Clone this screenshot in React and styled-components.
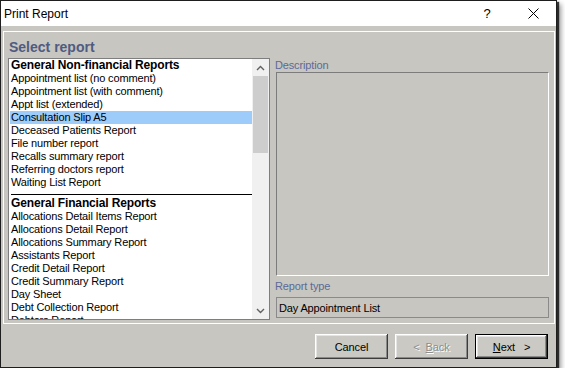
import React from "react";
import styled, { createGlobalStyle } from "styled-components";

const GlobalStyle = createGlobalStyle`
  html, body { margin: 0; padding: 0; background: #ffffff; }
  body { font-family: "Liberation Sans", Arial, sans-serif; }
  * { box-sizing: border-box; }
`;

const GRAY = "#c8c6c0";

const Window = styled.div`
  width: 557px;
  height: 368px;
  border: 1px solid #1e1e1e;
  display: flex;
  flex-direction: column;
  background: ${GRAY};
  box-shadow: 2px 2px 1px rgba(0, 0, 0, 0.75), 4px 4px 5px rgba(0, 0, 0, 0.4);
`;

const TitleBar = styled.div`
  height: 25px;
  flex: none;
  background: #ffffff;
  display: flex;
  align-items: center;
`;

const Title = styled.div`
  flex: 1;
  padding-left: 3px;
  font-size: 12px;
  color: #000;
`;

const TitleButton = styled.div`
  width: 46px;
  height: 25px;
  display: flex;
  align-items: center;
  justify-content: center;
  font-size: 13px;
  color: #000;
`;

const Body = styled.div`
  flex: 1;
  display: flex;
  flex-direction: column;
  padding: 5px 1px 0 2px;
`;

const Panel = styled.div`
  height: 293px;
  border: 1px solid #ffffff;
  display: flex;
  gap: 6px;
  padding: 7px 5px 0 4px;
`;

const LeftCol = styled.div`
  width: 262px;
  display: flex;
  flex-direction: column;
`;

const Heading = styled.div`
  font-size: 14px;
  line-height: 16px;
  font-weight: bold;
  color: #4f5b82;
  margin: 0 0 3px 1px;
`;

const ListBox = styled.div`
  height: 262px;
  border: 1px solid #7e7e7e;
  background: #ffffff;
  display: flex;
  overflow: hidden;
`;

const Items = styled.div`
  flex: 1;
  padding-left: 1px;
  overflow: hidden;
`;

const Row = styled.div`
  height: 13px;
  line-height: 13px;
  padding-left: 1px;
  font-size: ${(p) => (p.$group ? "12px" : "11px")};
  font-weight: ${(p) => (p.$group ? "bold" : "normal")};
  letter-spacing: -0.15px;
  white-space: nowrap;
  color: #000;
  background: ${(p) => (p.$selected ? "#9dcbfa" : "transparent")};
`;

const Separator = styled.div`
  height: 8px;
  padding-top: 5px;
  &::after {
    content: "";
    display: block;
    height: 1px;
    margin-left: 1px;
    background: #000;
  }
`;

const ScrollBar = styled.div`
  width: 17px;
  flex: none;
  background: #f0f0f0;
  display: flex;
  flex-direction: column;
`;

const ScrollArrow = styled.div`
  height: 17px;
  display: flex;
  align-items: center;
  justify-content: center;
`;

const ScrollTrack = styled.div`
  flex: 1;
  padding: 0 1px;
`;

const Thumb = styled.div`
  height: 77px;
  background: #cdcdcd;
`;

const RightCol = styled.div`
  width: 273px;
  display: flex;
  flex-direction: column;
  padding-top: 19px;
`;

const FieldLabel = styled.div`
  font-size: 11px;
  line-height: 14px;
  letter-spacing: -0.15px;
  color: #5b6a98;
  margin: ${(p) => p.$spacing || "0"};
  margin-left: -1px;
`;

const DescriptionBox = styled.div`
  height: 204px;
  border-top: 1px solid #7c7c7c;
  border-left: 1px solid #7c7c7c;
  border-bottom: 1px solid #ffffff;
  border-right: 1px solid #ffffff;
`;

const ReadOnlyField = styled.div`
  height: 21px;
  border: 1px solid #8a8a8a;
  padding-left: 2px;
  display: flex;
  align-items: center;
  font-size: 11px;
  letter-spacing: -0.15px;
  color: #000;
`;

const Footer = styled.div`
  flex: 1;
  display: flex;
  justify-content: flex-end;
  align-items: flex-start;
  gap: 7px;
  padding: 10px 7px 0 0;
`;

const Button = styled.div`
  width: 73px;
  height: 25px;
  display: flex;
  align-items: center;
  justify-content: center;
  font-size: 11px;
  letter-spacing: -0.1px;
  white-space: pre;
  color: ${(p) => (p.$disabled ? "#8d8d8d" : "#000")};
  text-shadow: ${(p) => (p.$disabled ? "1px 1px 0 #ffffff" : "none")};
  background: #cbc9c3;
  border: 1px solid ${(p) => (p.$default ? "#000" : "transparent")};
  box-shadow: ${(p) =>
    p.$default
      ? "inset -1px -1px #3c3c3c, inset 1px 1px #ffffff, inset -2px -2px #8a8a8a, inset 2px 2px #e4e4e4"
      : "inset -1px -1px #3c3c3c, inset 1px 1px #ffffff, inset -2px -2px #8a8a8a, inset 2px 2px #e4e4e4"};
  ${(p) => (p.$default ? "" : "border: none;")}
  u { text-decoration: underline; }
`;

const Chevron = ({ down }) => (
  <svg width="9" height="6" viewBox="0 0 9 6">
    <path
      d={down ? "M1 1 L4.5 4.5 L8 1" : "M1 5 L4.5 1.5 L8 5"}
      fill="none"
      stroke="#606060"
      strokeWidth="1.4"
    />
  </svg>
);

const CloseIcon = () => (
  <svg width="11" height="11" viewBox="0 0 11 11">
    <path d="M0.5 0.5 L10.5 10.5 M10.5 0.5 L0.5 10.5" stroke="#000" strokeWidth="1" />
  </svg>
);

const groups = [
  {
    title: "General Non-financial Reports",
    items: [
      "Appointment list (no comment)",
      "Appointment list (with comment)",
      "Appt list (extended)",
      "Consultation Slip A5",
      "Deceased Patients Report",
      "File number report",
      "Recalls summary report",
      "Referring doctors report",
      "Waiting List Report",
    ],
  },
  {
    title: "General Financial Reports",
    items: [
      "Allocations Detail Items Report",
      "Allocations Detail Report",
      "Allocations Summary Report",
      "Assistants Report",
      "Credit Detail Report",
      "Credit Summary Report",
      "Day Sheet",
      "Debt Collection Report",
      "Debtors Report",
    ],
  },
];

export default function App() {
  return (
    <>
      <GlobalStyle />
      <Window>
        <TitleBar>
          <Title>Print Report</Title>
          <TitleButton>?</TitleButton>
          <TitleButton>
            <CloseIcon />
          </TitleButton>
        </TitleBar>
        <Body>
          <Panel>
            <LeftCol>
              <Heading>Select report</Heading>
              <ListBox>
                <Items>
                  {groups.map((g, gi) => (
                    <React.Fragment key={g.title}>
                      {gi > 0 && <Separator />}
                      <Row $group>{g.title}</Row>
                      {g.items.map((it) => (
                        <Row key={it} $selected={it === "Consultation Slip A5"}>
                          {it}
                        </Row>
                      ))}
                    </React.Fragment>
                  ))}
                </Items>
                <ScrollBar>
                  <ScrollArrow>
                    <Chevron />
                  </ScrollArrow>
                  <ScrollTrack>
                    <Thumb />
                  </ScrollTrack>
                  <ScrollArrow>
                    <Chevron down />
                  </ScrollArrow>
                </ScrollBar>
              </ListBox>
            </LeftCol>
            <RightCol>
              <FieldLabel>Description</FieldLabel>
              <DescriptionBox />
              <FieldLabel $spacing="3px 0 4px 0">Report type</FieldLabel>
              <ReadOnlyField>Day Appointment List</ReadOnlyField>
            </RightCol>
          </Panel>
          <Footer>
            <Button>Cancel</Button>
            <Button $disabled>
              {"<  "}
              <u>B</u>
              {"ack"}
            </Button>
            <Button $default>
              <u>N</u>
              {"ext   >"}
            </Button>
          </Footer>
        </Body>
      </Window>
    </>
  );
}
